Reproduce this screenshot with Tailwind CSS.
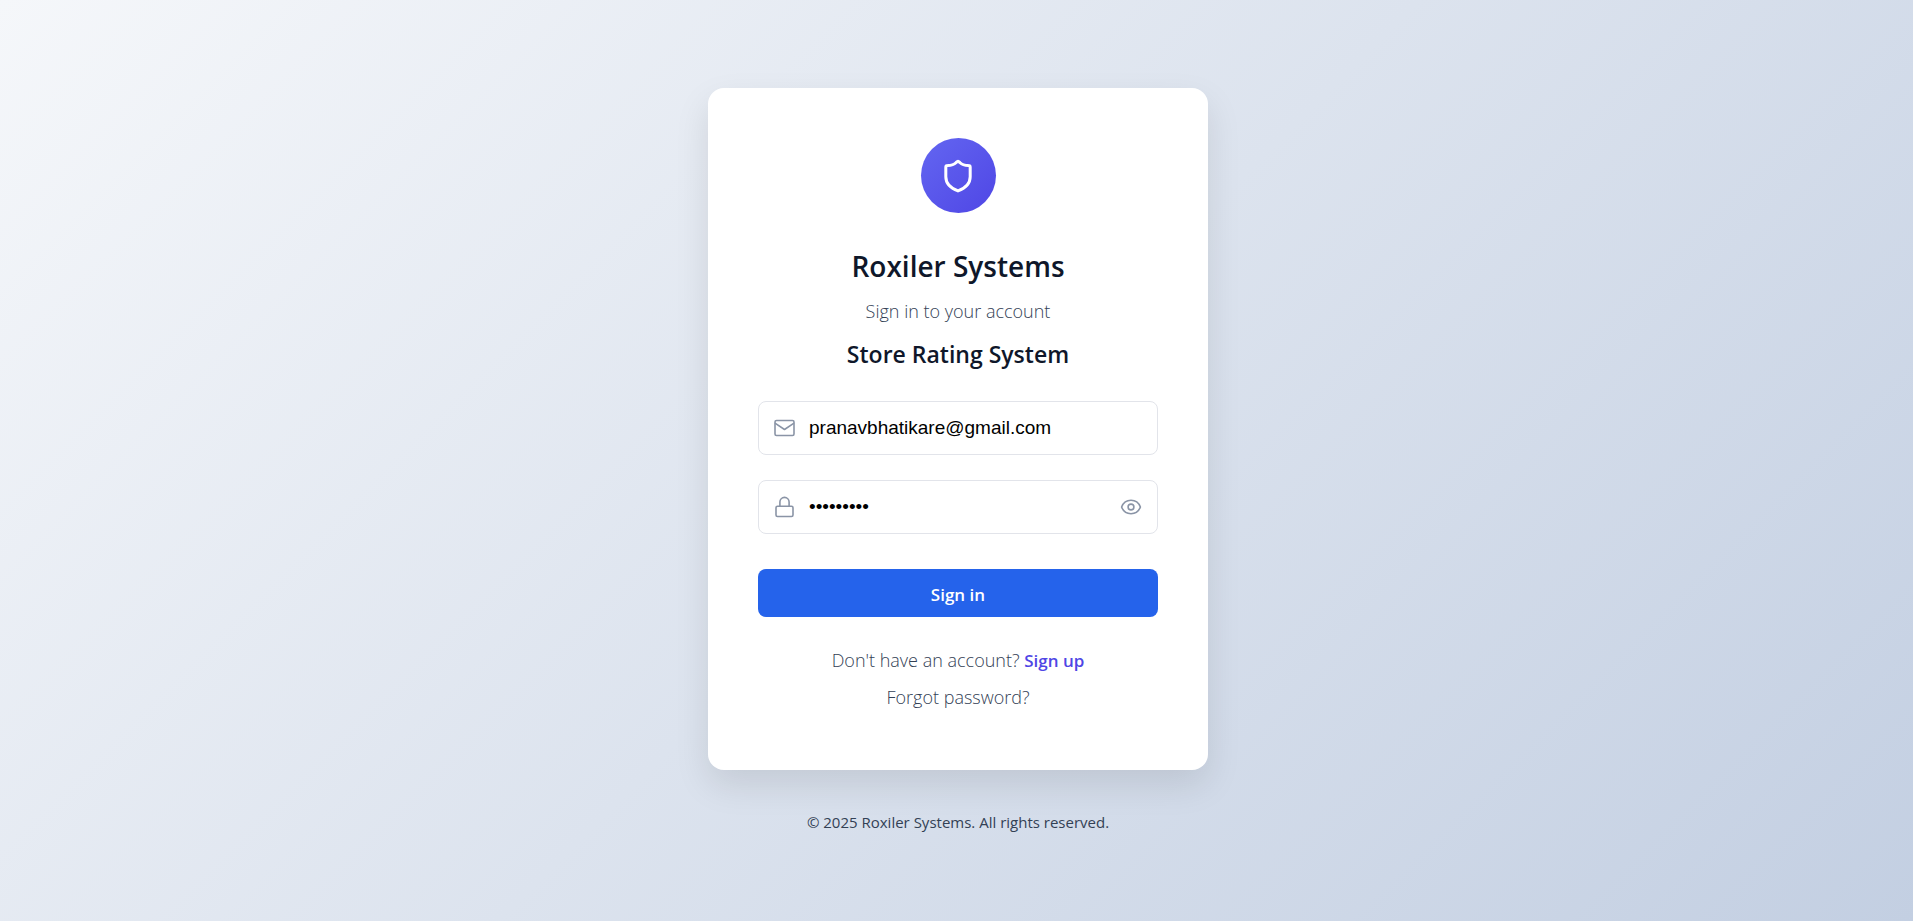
<!DOCTYPE html>
<html lang="en">
<head>
<meta charset="utf-8">
<meta name="viewport" content="width=device-width, initial-scale=1">
<title>Roxiler Systems – Sign in</title>
<script src="https://cdn.jsdelivr.net/npm/@tailwindcss/browser@4"></script>
</head>
<body class="flex min-h-screen flex-col items-center justify-center bg-linear-[135deg,#f5f7fa_0%,#c3cfe2_100%] pt-[41px] pr-4 pb-10 pl-[19px] font-['Open_Sans','Noto_Sans',sans-serif] text-[#334155]">
  <main class="w-full max-w-[500px] rounded-2xl bg-white px-[50px] pt-[50px] pb-[61px] shadow-[0_15px_35px_rgba(0,0,0,0.1)]">
    <header class="flex flex-col items-center text-center">
      <div class="mb-8 flex size-[75px] items-center justify-center rounded-full bg-linear-[135deg,#6366f1,#4f46e5] text-white">
        <svg class="size-[38px]" viewBox="0 0 24 24" fill="none" stroke="currentColor" stroke-width="1.9" stroke-linecap="round" stroke-linejoin="round" aria-hidden="true"><path d="M12 2.700c.5 0 .8.4 1.3.9 1.200 1.200 3 1.700 5.300 1.800.7 0 1.100.4 1.100 1v6c0 4.200-3 7.200-7.700 9-4.700-1.800-7.700-4.800-7.700-9v-6c0-.6.4-1 1.100-1 2.300-.1 4.100-.6 5.300-1.800.5-.5.8-.9 1.300-.9z"/></svg>
      </div>
      <h1 class="text-[28px] leading-[42px] font-semibold text-[#0f172a]">Roxiler Systems</h1>
      <p class="mt-3 text-[18px] leading-6 font-light">Sign in to your account</p>
      <h2 class="mt-[15px] text-[23px] leading-8 font-semibold text-[#0f172a]">Store Rating System</h2>
    </header>
    <form class="mt-[31px]">
      <div class="flex h-[54px] items-center gap-3 rounded-lg border border-[#e2e4ea] px-[14px]">
        <svg class="size-6 shrink-0 text-[#8a94a6]" viewBox="0 0 24 24" fill="none" stroke="currentColor" stroke-width="1.6" stroke-linejoin="round" aria-hidden="true"><rect x="2" y="4.500" width="19" height="15" rx="1.500"/><path d="M2 7.200 11.500 13.500l9.500-6.300"/></svg>
        <input type="email" aria-label="Email" value="pranavbhatikare@gmail.com" class="min-w-0 flex-1 bg-transparent font-['Liberation_Sans',sans-serif] text-[19px] text-black outline-none">
      </div>
      <div class="mt-[25px] flex h-[54px] items-center gap-3 rounded-lg border border-[#e2e4ea] px-[14px]">
        <svg class="size-6 shrink-0 text-[#8a94a6]" viewBox="0 0 24 24" fill="none" stroke="currentColor" stroke-width="1.6" stroke-linejoin="round" aria-hidden="true"><rect x="3" y="11.200" width="17" height="10.300" rx="1.500"/><path d="M6.900 11.200V7a4.600 4.600 0 0 1 9.200 0v4.200"/></svg>
        <input type="password" aria-label="Password" value="password1" class="min-w-0 flex-1 bg-transparent font-['Liberation_Sans',sans-serif] text-[19px] text-black outline-none">
        <button type="button" aria-label="Show password" class="text-[#8a94a6]">
          <svg class="size-6" viewBox="0 0 24 24" fill="none" stroke="currentColor" stroke-width="1.6" stroke-linejoin="round" aria-hidden="true"><path d="M2.600 12C4.300 7.600 8 5.300 12 5.300s7.700 2.300 9.400 6.700c-1.700 4.400-5.400 6.700-9.400 6.700S4.300 16.400 2.600 12z"/><circle cx="12" cy="12" r="2.900"/></svg>
        </button>
      </div>
      <button type="submit" class="mt-[35px] flex h-12 w-full items-center justify-center rounded-lg bg-[#2563eb] pt-[3px] text-[17px] font-semibold text-white">Sign in</button>
    </form>
    <div class="mt-[31px] flex flex-col items-center gap-3 text-center text-[18px] leading-6 font-light">
      <p>Don't have an account? <a href="#signup" class="text-[17px] font-semibold text-[#4f46e5]">Sign up</a></p>
      <a href="#forgot">Forgot password?</a>
    </div>
  </main>
  <footer class="mt-10 text-center text-[15px] leading-6 text-[#334155]">© 2025 Roxiler Systems. All rights reserved.</footer>
</body>
</html>
